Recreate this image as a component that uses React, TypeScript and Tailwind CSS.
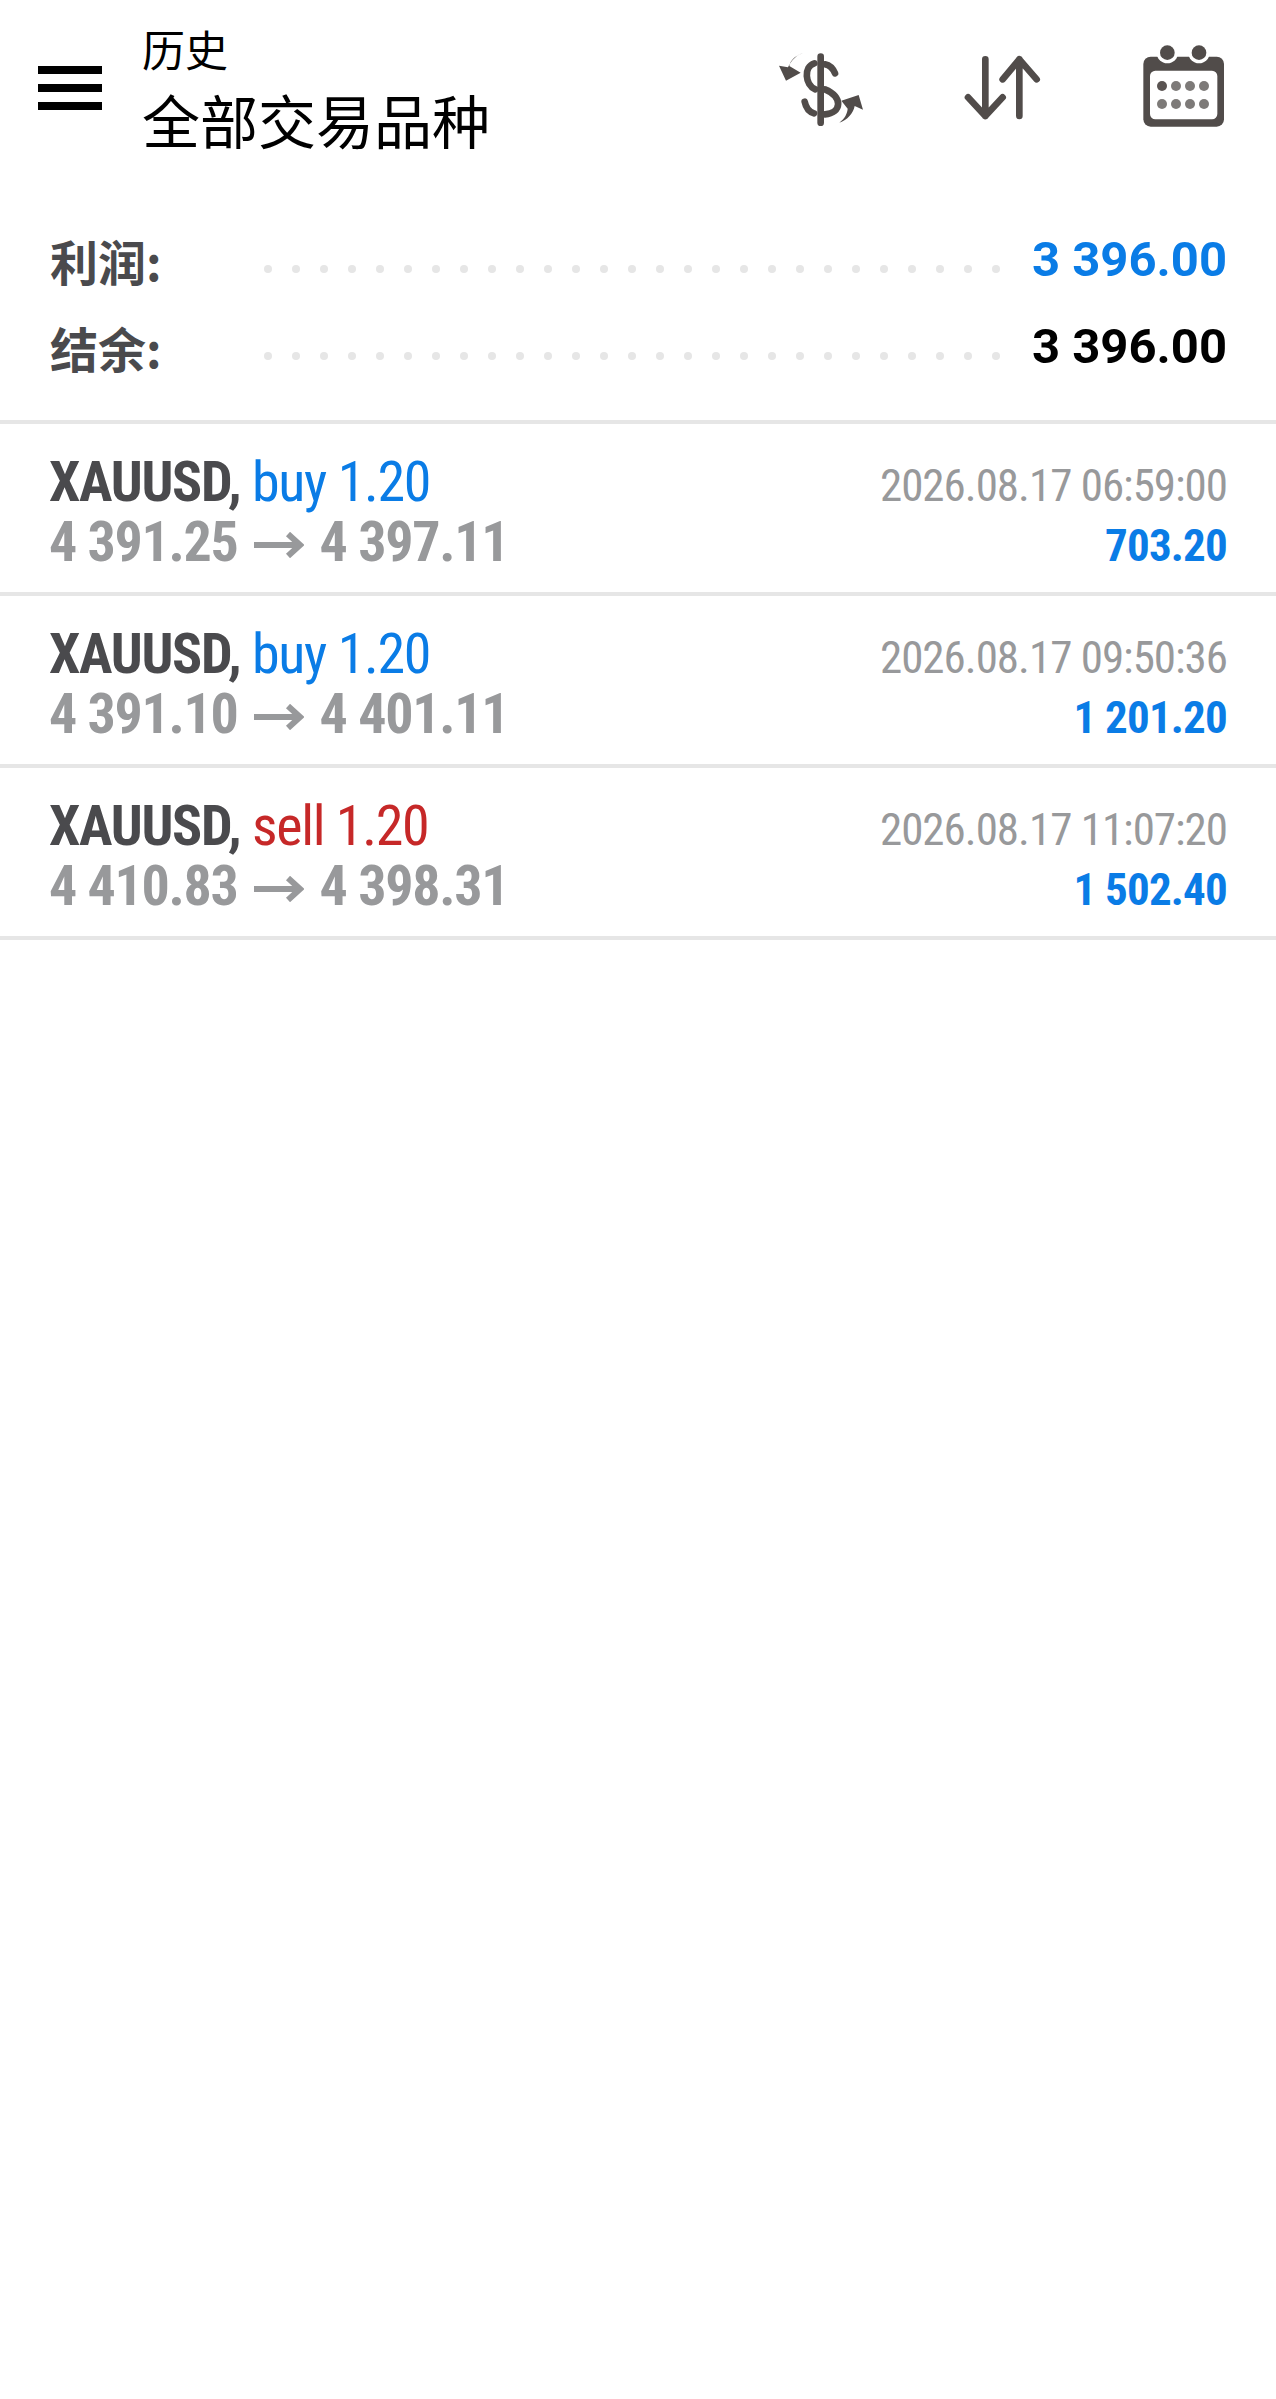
const trades = [
  { side: "buy 1.20", sideColor: "text-[#0a7ce6]", open: "4 391.25", close: "4 397.11", time: "2026.08.17 06:59:00", profit: "703.20" },
  { side: "buy 1.20", sideColor: "text-[#0a7ce6]", open: "4 391.10", close: "4 401.11", time: "2026.08.17 09:50:36", profit: "1 201.20" },
  { side: "sell 1.20", sideColor: "text-[#c62828]", open: "4 410.83", close: "4 398.31", time: "2026.08.17 11:07:20", profit: "1 502.40" },
];
const dots = Array.from({ length: 27 }, (_, i) => i);
const cjk = "font-['Noto_Sans_CJK_SC',sans-serif]";
const roboto = "font-['Roboto',sans-serif]";

function DollarIcon() {
  return (
    <svg width="120" height="100" viewBox="0 0 360 300" fill="none" stroke="#514c4a" strokeWidth="20" strokeLinecap="round">
      <path d="M182 80V278" />
      <path d="M195 103C210 106 220 118 225 130" />
      <path d="M163 100C130 110 135 165 166 178" />
      <path d="M195 178C250 200 245 250 195 253" />
      <path d="M134 215C138 235 148 246 162 250" />
      <path stroke="none" fill="#514c4a" d="M128 70C100 80 90 95 88 108L122 128 78 152 57 107 84 112C95 90 110 75 128 70Z" />
      <path stroke="none" fill="#514c4a" d="M238 278C255 265 262 250 263 236L244 212 296 195 309 239 284 228C280 250 262 270 238 278Z" />
    </svg>
  );
}

function ArrowsIcon() {
  return (
    <svg width="120" height="100" viewBox="588 30 360 300" fill="none" stroke="#514c4a" strokeWidth="20" strokeLinecap="round" strokeLinejoin="round">
      <path d="M718 118V288M666 232L718 288L770 232" />
      <path d="M820 288V118M770 178L820 118L872 178" />
    </svg>
  );
}

function CalendarIcon() {
  return (
    <svg width="120" height="100" viewBox="0 0 360 300">
      <rect x="40" y="80" width="242" height="210" rx="22" fill="#514c4a" />
      <rect x="60" y="122" width="202" height="146" rx="16" fill="#fff" />
      <circle cx="112" cy="68" r="32" fill="#fff" />
      <circle cx="207" cy="68" r="32" fill="#fff" />
      <circle cx="112" cy="68" r="22" fill="#514c4a" />
      <circle cx="207" cy="68" r="22" fill="#514c4a" />
      {[96, 138, 180, 222].map((x) => (
        <g key={x}>
          <circle cx={x} cy="168" r="15" fill={x === 96 ? "#5a5452" : "#7d7a78"} />
          <circle cx={x} cy="222" r="15" fill="#7d7a78" />
        </g>
      ))}
    </svg>
  );
}

function PriceArrow() {
  return (
    <svg width="50" height="26" viewBox="0 0 50 26" fill="none" stroke="#98999b" strokeWidth="6" className="mx-[16px] mt-[6px] shrink-0">
      <path d="M0 13H46M34 2L46 13L34 24" />
    </svg>
  );
}

function SummaryRow({ label, value, color }: { label: string; value: string; color: string }) {
  return (
    <div className="flex h-[87px] items-center">
      <div className={`w-[214px] shrink-0 text-[48px] font-bold leading-none text-[#4a4a4d] ${cjk}`}>{label}</div>
      <div className="mt-[18px] flex shrink-0 gap-[20px]">
        {dots.map((d) => (
          <span key={d} className="h-[8px] w-[8px] shrink-0 rounded-full bg-[#e6e6e6]" />
        ))}
      </div>
      <div className={`ml-auto text-[49px] font-bold leading-none ${color} ${roboto}`}>{value}</div>
    </div>
  );
}

function TradeRow({ t }: { t: (typeof trades)[number] }) {
  return (
    <div className="flex h-[172px] items-start justify-between border-b-4 border-[#e6e6e6] pl-[49px] pr-[49px] pt-[28px]">
      <div className={`${roboto} [font-stretch:75%]`}>
        <div className="text-[56px] leading-[60px] tracking-[-1.3px]">
          <span className="font-bold text-[#4a4a4d]">XAUUSD, </span>
          <span className={t.sideColor}>{t.side}</span>
        </div>
        <div className="flex items-center text-[56px] font-bold leading-[60px] tracking-[-1.3px] text-[#98999b]">
          <span>{t.open}</span>
          <PriceArrow />
          <span>{t.close}</span>
        </div>
      </div>
      <div className={`${roboto} pt-[4px] text-right [font-stretch:75%]`}>
        <div className="text-[45px] leading-[60px] tracking-[-1px] text-[#98999b]">{t.time}</div>
        <div className="text-[45px] font-bold leading-[60px] tracking-[-0.8px] text-[#0a7ce6]">{t.profit}</div>
      </div>
    </div>
  );
}

export default function App() {
  return (
    <div className="h-[2399px] w-[1276px] overflow-hidden bg-white">
      <header className="flex h-[160px] items-center pr-[26px]">
        <div className="ml-[38px] mt-[16px] flex w-[64px] shrink-0 flex-col gap-[10px]">
          <span className="h-[8px] bg-black" />
          <span className="h-[8px] bg-black" />
          <span className="h-[8px] bg-black" />
        </div>
        <div className={`ml-[40px] text-black ${cjk}`}>
          <div className="text-[43px] leading-[78px]">历史</div>
          <div className="text-[58px] leading-[64px]">全部交易品种</div>
        </div>
        <div className="ml-auto flex">
          <DollarIcon />
          <div className="ml-[62px] mr-[68px]">
            <ArrowsIcon />
          </div>
          <CalendarIcon />
        </div>
      </header>
      <section className="h-[264px] border-b-4 border-[#e6e6e6] pl-[50px] pr-[49px] pt-[56px]">
        <SummaryRow label="利润:" value="3 396.00" color="text-[#0a7ce6]" />
        <SummaryRow label="结余:" value="3 396.00" color="text-black" />
      </section>
      {trades.map((t) => (
        <TradeRow key={t.time} t={t} />
      ))}
    </div>
  );
}
